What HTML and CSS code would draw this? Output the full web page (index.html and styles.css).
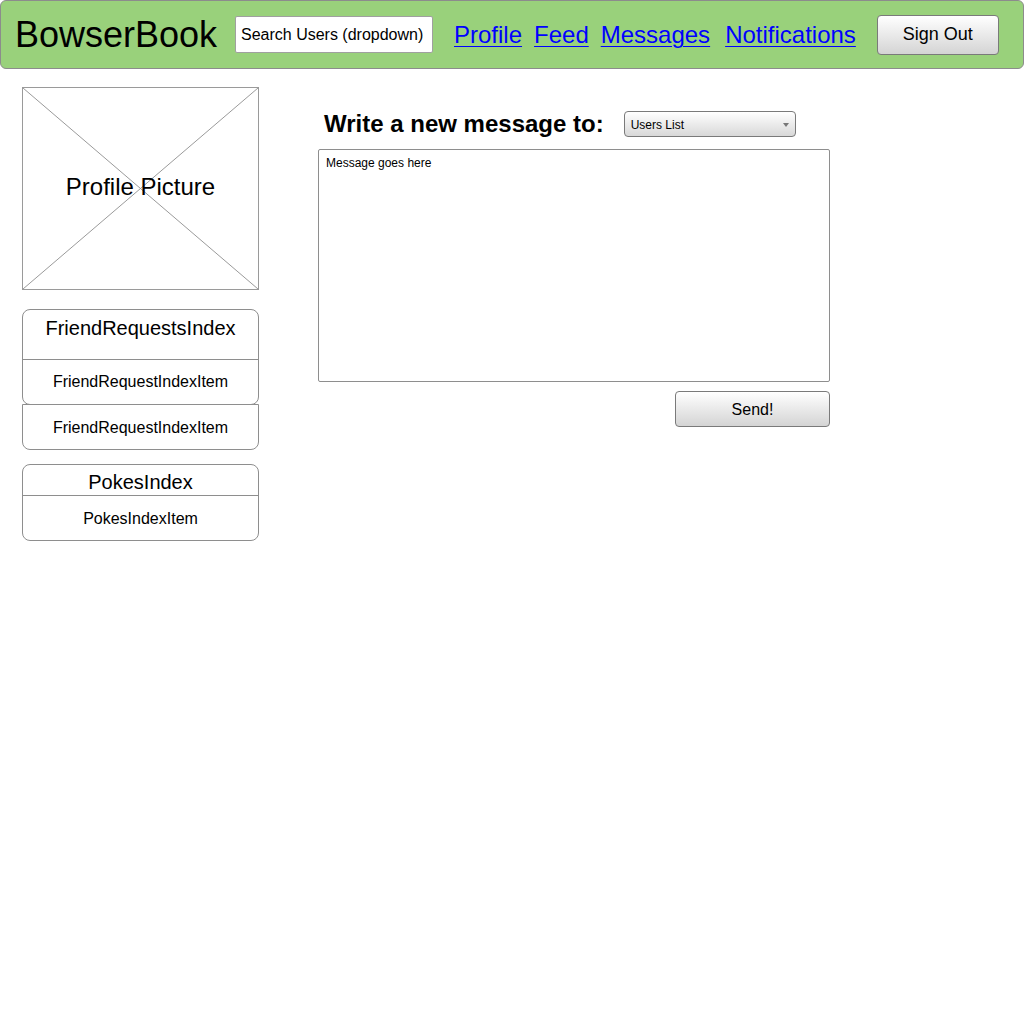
FILE: index.html
```html
<!DOCTYPE html>
<html>
<head>
<meta charset="utf-8">
<link rel="stylesheet" href="styles.css">
</head>
<body>
<header class="topbar">
  <div class="logo">BowserBook</div>
  <div class="search">Search Users (dropdown)</div>
  <nav class="nav">
    <a href="#" class="nav-link nav-profile">Profile</a>
    <a href="#" class="nav-link nav-feed">Feed</a>
    <a href="#" class="nav-link nav-messages">Messages</a>
    <a href="#" class="nav-link nav-last">Notifications</a>
  </nav>
  <div class="btn signout">Sign Out</div>
</header>
<div class="page">
  <aside class="sidebar">
    <div class="picture">
      <svg class="picture-x" viewBox="0 0 100 100" preserveAspectRatio="none">
        <line x1="0" y1="0" x2="100" y2="100" stroke="#9a9a9a" stroke-width="1" vector-effect="non-scaling-stroke"/>
        <line x1="100" y1="0" x2="0" y2="100" stroke="#9a9a9a" stroke-width="1" vector-effect="non-scaling-stroke"/>
      </svg>
      <span class="picture-label">Profile Picture</span>
    </div>
    <div class="friends">
      <div class="box box-first">
        <div class="box-title fr-title">FriendRequestsIndex</div>
        <div class="box-item">FriendRequestIndexItem</div>
      </div>
      <div class="box box-second">
        <div class="box-item">FriendRequestIndexItem</div>
      </div>
    </div>
    <div class="box pokes">
      <div class="box-title pokes-title">PokesIndex</div>
      <div class="box-item">PokesIndexItem</div>
    </div>
  </aside>
  <main class="main">
    <div class="compose-head">
      <h1 class="compose-title">Write a new message to:</h1>
      <div class="select">
        <span>Users List</span>
        <span class="arrow"></span>
      </div>
    </div>
    <div class="textarea">Message goes here</div>
    <div class="send-row">
      <div class="btn send">Send!</div>
    </div>
  </main>
</div>
</body>
</html>
```
FILE: styles.css
```css
* { box-sizing: border-box; }
html, body { margin: 0; padding: 0; background: #fff; }
body { font-family: "Liberation Sans", Arial, sans-serif; color: #000; }

.topbar {
  display: flex;
  align-items: center;
  height: 69px;
  background: #99d17b;
  border: 1px solid #8c8c8c;
  border-radius: 6px;
  padding-left: 14px;
}
.logo {
  font-size: 36px;
  line-height: 40px;
  width: 200px;
  white-space: nowrap;
}
.search {
  margin-left: 20px;
  width: 198px;
  height: 37px;
  background: #fff;
  border: 1px solid #a0a0a0;
  border-radius: 2px;
  font-size: 16px;
  line-height: 35px;
  padding-left: 5px;
  white-space: nowrap;
}
.nav { display: flex; margin-left: 21px; }
.nav-link {
  font-size: 24px;
  line-height: 28px;
  color: #0000ff;
  text-decoration: underline;
  text-decoration-thickness: 1px;
  text-underline-offset: 3px;
  margin-right: 13px;
  white-space: nowrap;
}
.nav-profile { margin-right: 12px; }
.nav-feed { margin-right: 12px; }
.nav-messages { margin-right: 15px; }
.nav-last { margin-right: 0; }
.btn {
  display: flex;
  align-items: center;
  justify-content: center;
  background: linear-gradient(#ffffff, #d4d4d4);
  border: 1px solid #7a7a7a;
  border-radius: 4px;
}
.signout {
  margin-left: 21px;
  width: 122px;
  height: 40px;
  font-size: 18px;
}

.page {
  display: flex;
  padding: 18px 0 0 22px;
}
.sidebar { width: 237px; flex: none; }
.picture {
  position: relative;
  height: 203px;
  border: 1px solid #9a9a9a;
  display: flex;
  align-items: center;
  justify-content: center;
}
.picture-x {
  position: absolute;
  left: 0; top: 0;
  width: 100%; height: 100%;
}
.picture-label {
  position: relative;
  font-size: 24px;
  margin-top: -3px;
}
.friends { margin-top: 19px; }
.box {
  border: 1px solid #8e8e8e;
  border-radius: 8px;
  background: #fff;
  text-align: center;
}
.box-title { border-bottom: 1px solid #8e8e8e; font-size: 20px; }
.fr-title { height: 50px; line-height: 36px; }
.pokes-title { height: 31px; line-height: 34px; }
.box-item { height: 44px; line-height: 45px; font-size: 16px; }
.box-first { height: 96px; }
.box-first .box-item { line-height: 43px; }
.box-second {
  margin-top: -1px;
  border-radius: 0 0 8px 8px;
  height: 46px;
}
.pokes { margin-top: 14px; height: 77px; }

.main { margin-left: 59px; }
.compose-head {
  display: flex;
  align-items: center;
  margin-top: 24px;
  height: 26px;
  padding-left: 6px;
}
.compose-title {
  margin: 0;
  font-size: 24px;
  font-weight: bold;
  line-height: 26px;
  white-space: nowrap;
}
.select {
  margin-left: 20px;
  width: 172px;
  height: 26px;
  border: 1px solid #7a7a7a;
  border-radius: 4px;
  background: linear-gradient(#ffffff, #d8d8d8);
  font-size: 12px;
  display: flex;
  align-items: center;
  justify-content: space-between;
  padding: 2px 6px 0 6px;
}
.arrow {
  width: 0; height: 0;
  border-left: 3px solid transparent;
  border-right: 3px solid transparent;
  border-top: 4px solid #777;
  margin-top: -1px;
}
.textarea {
  margin-top: 12px;
  width: 512px;
  height: 233px;
  border: 1px solid #8e8e8e;
  border-radius: 2px;
  font-size: 12px;
  padding: 6px 7px;
}
.send-row {
  display: flex;
  justify-content: flex-end;
  width: 512px;
  margin-top: 9px;
}
.send {
  width: 155px;
  height: 36px;
  font-size: 16px;
  padding-top: 1px;
}
```
